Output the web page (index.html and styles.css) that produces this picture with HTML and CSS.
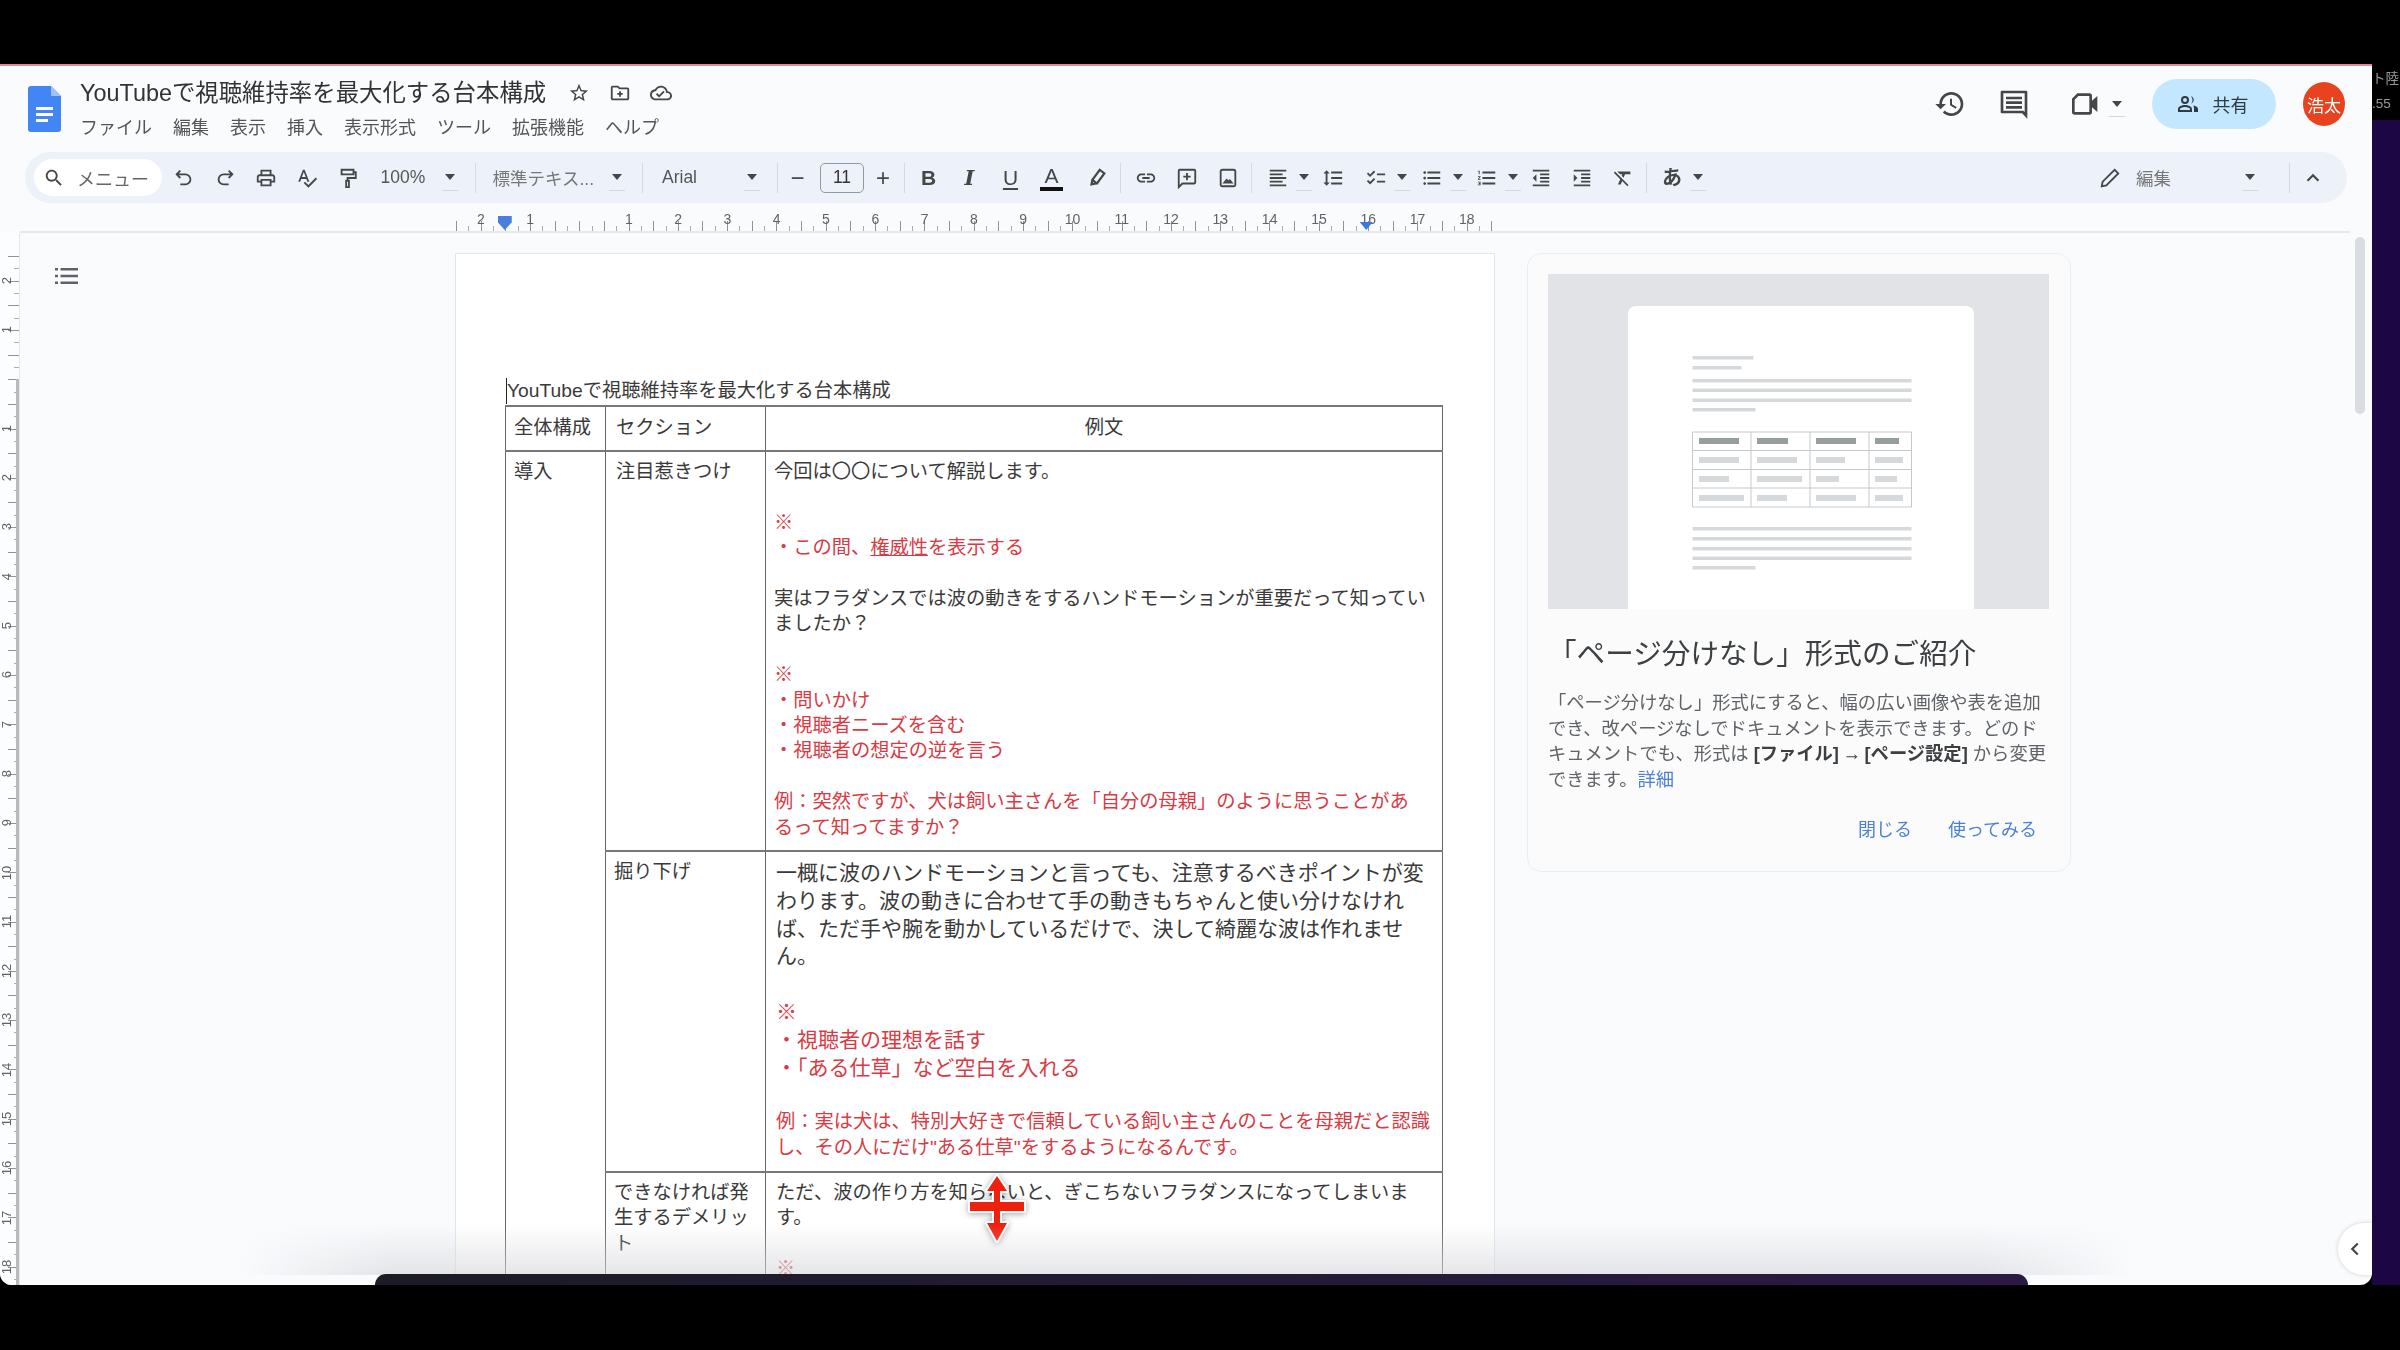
FILE: index.html
```html
<!DOCTYPE html>
<html lang="ja">
<head>
    <meta charset="UTF-8">
    <meta name="viewport" content="width=device-width, initial-scale=1.0">
    <title>YouTubeで視聴維持率を最大化する台本構成</title>
    <link rel="stylesheet" href="styles.css">
</head>
<body>
    <div class="screen">
        <div class="window">
            <!-- Title bar -->
            <div class="head">
                <svg class="logo" viewBox="0 0 33 46"><path fill="#4285f4" d="M3 0h20l10 10v33a3 3 0 0 1-3 3H3a3 3 0 0 1-3-3V3a3 3 0 0 1 3-3z"/><path fill="#a1c2fa" d="M23 0l10 10H23z"/><path fill="#fff" d="M8 21h17v3H8zM8 27h17v3H8zM8 33h12v3H8z"/></svg>
                <div class="doc-info">
                    <div class="title-row">
                        <span class="doc-title">YouTubeで視聴維持率を最大化する台本構成</span>
                        <div class="title-icons">
                            <svg class="ic" viewBox="0 0 24 24"><path d="M22 9.24l-7.19-.62L12 2 9.19 8.63 2 9.24l5.46 4.73L5.82 21 12 17.27 18.18 21l-1.63-7.03L22 9.24zM12 15.4l-3.76 2.27 1-4.28-3.32-2.88 4.38-.38L12 6.1l1.71 4.04 4.38.38-3.32 2.88 1 4.28L12 15.4z"/></svg>
                            <svg class="ic" viewBox="0 0 24 24"><path d="M20 6h-8l-2-2H4c-1.1 0-1.99.9-1.99 2L2 18c0 1.1.9 2 2 2h16c1.1 0 2-.9 2-2V8c0-1.1-.9-2-2-2zm0 12H4V6h5.17l2 2H20v10z"/><path d="M11 10h2v2h2v2h-2v2h-2v-2H9v-2h2z"/></svg>
                            <svg class="ic" viewBox="0 0 24 24"><path d="M19.35 10.04C18.67 6.59 15.64 4 12 4 9.11 4 6.6 5.64 5.35 8.04 2.34 8.36 0 10.91 0 14c0 3.31 2.69 6 6 6h13c2.76 0 5-2.24 5-5 0-2.64-2.05-4.78-4.65-4.96zM19 18H6c-2.21 0-4-1.79-4-4 0-2.05 1.53-3.76 3.56-3.97l1.07-.11.5-.95C8.08 7.14 9.94 6 12 6c2.62 0 4.88 1.86 5.39 4.43l.3 1.5 1.53.11c1.56.1 2.78 1.41 2.78 2.96 0 1.65-1.35 3-3 3zm-9-3.82l-2.09-2.09L6.5 13.5 10 17l6.01-6.01-1.41-1.41z"/></svg>
                        </div>
                    </div>
                    <div class="menu-row">
                        <span>ファイル</span><span>編集</span><span>表示</span><span>挿入</span><span>表示形式</span><span>ツール</span><span>拡張機能</span><span>ヘルプ</span>
                    </div>
                </div>
                <div class="head-right">
                    <svg class="ic-lg" viewBox="0 0 24 24"><path d="M13 3c-4.97 0-9 4.03-9 9H1l3.89 3.89.07.14L9 12H6c0-3.87 3.13-7 7-7s7 3.13 7 7-3.13 7-7 7c-1.93 0-3.68-.79-4.94-2.06l-1.42 1.42C8.27 19.99 10.51 21 13 21c4.97 0 9-4.03 9-9s-4.03-9-9-9zm-1 5v5l4.28 2.54.72-1.21-3.5-2.08V8H12z"/></svg>
                    <svg class="ic-lg comment-ic" viewBox="0 0 24 24"><path d="M3 2h18a1 1 0 0 1 1 1v20l-4-4H3a1 1 0 0 1-1-1V3a1 1 0 0 1 1-1zm1 2v13h15l1 1V4z"/><path d="M6 6.5h12v2H6zM6 10h12v2H6zM6 13.5h12v2H6z"/></svg>
                    <svg class="ic-lg camera-ic" viewBox="0 0 24 24"><path d="M7 4h9a2 2 0 0 1 2 2v3.500L22 6v12l-4-3.500V18a2 2 0 0 1-2 2H5a2 2 0 0 1-2-2V8zm.8 2L5 8.800V18h11V6z"/></svg>
                    <span class="caret caret-plain"></span>
                    <div class="share-btn">
                        <svg class="ic-share" viewBox="0 0 24 24"><path d="M9 4a4 4 0 1 1 0 8 4 4 0 0 1 0-8zm0 2a2 2 0 1 0 0 4 2 2 0 0 0 0-4zM9 13c3.300 0 7 1.600 7 4v3H2v-3c0-2.400 3.700-4 7-4zm0 2c-2.700 0-5 1.200-5 2v1h10v-1c0-.8-2.300-2-5-2zM15 4.200a4 4 0 0 1 0 7.600 6 6 0 0 0 0-7.600zM17.500 13.500c2.500.6 4.500 1.900 4.500 3.500v3h-4v-3c0-1.400-.2-2.500-.5-3.500z"/></svg>
                        <span>共有</span>
                    </div>
                    <div class="avatar">浩太</div>
                </div>
            </div>

            <!-- Toolbar -->
            <div class="toolbar">
                <div class="menu-search">
                    <svg class="ic" viewBox="0 0 24 24"><path d="M15.5 14h-.79l-.28-.27C15.41 12.59 16 11.11 16 9.500 16 5.910 13.090 3 9.500 3S3 5.910 3 9.500 5.910 16 9.500 16c1.610 0 3.090-.59 4.230-1.570l.27.28v.79l5 4.990L20.490 19l-4.990-5zm-6 0C7.010 14 5 11.990 5 9.500S7.010 5 9.500 5 14 7.010 14 9.500 11.990 14 9.500 14z"/></svg>
                    <span>メニュー</span>
                </div>
                <div class="tb"><svg class="ic st" viewBox="0 0 24 24"><path d="M8 4 4 8l4 4M4 8h9.500a5.500 5.500 0 0 1 0 11H8"/></svg></div>
                <div class="tb"><svg class="ic st" viewBox="0 0 24 24"><path d="M16 4l4 4-4 4M20 8h-9.500a5.500 5.500 0 0 0 0 11H16"/></svg></div>
                <div class="tb"><svg class="ic" viewBox="0 0 24 24"><path d="M19 8h-1V3H6v5H5c-1.660 0-3 1.340-3 3v6h4v4h12v-4h4v-6c0-1.660-1.340-3-3-3zM8 5h8v3H8V5zm8 12v2H8v-4h8v2zm2-2v-2H6v2H4v-4c0-.55.45-1 1-1h14c.55 0 1 .45 1 1v4h-2z"/></svg></div>
                <div class="tb"><svg class="ic" viewBox="0 0 24 24"><path d="M12.450 16h2.090L9.430 3H7.570L2.460 16h2.090l1.120-3h5.640l1.140 3zm-6.020-5L8.500 5.480 10.570 11H6.430zm15.160.59l-8.090 8.090L9.830 16l-1.410 1.410 5.090 5.090L23 13l-1.410-1.410z"/></svg></div>
                <div class="tb"><svg class="ic st" viewBox="0 0 24 24"><path d="M5 3h13v5H5zM18 5.500h2.500V12H11.500v3M10 15h3v7h-3z"/></svg></div>
                <div class="dd dd-zoom"><span>100%</span><span class="caret"></span></div>
                <div class="sep"></div>
                <div class="dd dd-style"><span>標準テキス...</span><span class="caret"></span></div>
                <div class="sep"></div>
                <div class="dd dd-font"><span>Arial</span><span class="caret"></span></div>
                <div class="sep tight"></div>
                <div class="tb tb-minus"><span class="sign">−</span></div>
                <div class="size-box">11</div>
                <div class="tb tb-plus"><span class="sign">+</span></div>
                <div class="sep after-plus"></div>
                <div class="tb"><span class="fmt fmt-b">B</span></div>
                <div class="tb"><span class="fmt fmt-i">I</span></div>
                <div class="tb"><span class="fmt fmt-u">U</span></div>
                <div class="tb"><span class="fmt fmt-a">A</span></div>
                <div class="tb ml4"><svg class="ic st thick" viewBox="0 0 24 24"><path d="M15 3l5 4-8 11-5-4zM7 14l-1 5 5-1"/></svg></div>
                <div class="sep after-high"></div>
                <div class="tb"><svg class="ic" viewBox="0 0 24 24"><path d="M3.900 12c0-1.710 1.390-3.100 3.100-3.100h4V7H7c-2.760 0-5 2.240-5 5s2.240 5 5 5h4v-1.900H7c-1.710 0-3.100-1.390-3.100-3.100zM8 13h8v-2H8v2zm9-6h-4v1.900h4c1.710 0 3.100 1.390 3.100 3.100s-1.390 3.100-3.100 3.100h-4V17h4c2.760 0 5-2.240 5-5s-2.240-5-5-5z"/></svg></div>
                <div class="tb"><svg class="ic st" viewBox="0 0 24 24"><path d="M4 3h16a1 1 0 0 1 1 1v13a1 1 0 0 1-1 1H7l-4 4V4a1 1 0 0 1 1-1zM12 6.500v8M8 10.500h8"/></svg></div>
                <div class="tb"><svg class="ic st" viewBox="0 0 24 24"><rect x="4" y="3" width="16" height="18" rx="2"/><path d="M8 17l2.500-3 2 2 1.500-1.500 2 2.500z"/></svg></div>
                <div class="sep after-image"></div>
                <div class="pair"><div class="tb-n"><svg class="ic" viewBox="0 0 24 24"><path d="M3 3h18v2H3zM3 7h14v2H3zM3 11h18v2H3zM3 15h14v2H3zM3 19h18v2H3z"/></svg></div><span class="caret"></span></div>
                <div class="tb ml1"><svg class="ic" viewBox="0 0 24 24"><path d="M6 7h2.500L5 3.500 1.500 7H4v10H1.500L5 20.500 8.500 17H6V7zm4-2v2h12V5H10zm0 14h12v-2H10v2zm0-6h12v-2H10v2z"/></svg></div>
                <div class="pair ml4"><div class="tb-n"><svg class="ic" viewBox="0 0 24 24"><path d="M22 7h-9v2h9V7zm0 8h-9v2h9v-2zM5.540 11L2 7.460l1.410-1.410 2.120 2.120 4.240-4.240 1.410 1.410L5.540 11zm0 8L2 15.460l1.410-1.410 2.120 2.120 4.240-4.240 1.410 1.410L5.540 19z"/></svg></div><span class="caret"></span></div>
                <div class="pair ml4"><div class="tb-n"><svg class="ic" viewBox="0 0 24 24"><path d="M4 10.500c-.83 0-1.500.67-1.500 1.500s.67 1.500 1.500 1.500 1.500-.67 1.500-1.500-.67-1.500-1.500-1.500zm0-6c-.83 0-1.500.67-1.500 1.500S3.170 7.500 4 7.500 5.500 6.830 5.500 6 4.830 4.500 4 4.500zm0 12c-.83 0-1.500.68-1.500 1.500s.68 1.500 1.500 1.500 1.500-.68 1.500-1.500-.67-1.500-1.500-1.500zM7 19h14v-2H7v2zm0-6h14v-2H7v2zm0-8v2h14V5H7z"/></svg></div><span class="caret"></span></div>
                <div class="pair ml3"><div class="tb-n"><svg class="ic" viewBox="0 0 24 24"><path d="M2 17h2v.5H3v1h1v.5H2v1h3v-4H2v1zm1-9h1V4H2v1h1v3zm-1 3h1.800L2 13.100v.9h3v-1H3.200L5 10.900V10H2v1zm5-6v2h14V5H7zm0 14h14v-2H7v2zm0-6h14v-2H7v2z"/></svg></div><span class="caret"></span></div>
                <div class="tb"><svg class="ic" viewBox="0 0 24 24"><path d="M11 17h10v-2H11v2zm-8-5l4 4V8l-4 4zm0 9h18v-2H3v2zM3 3v2h18V3H3zm8 6h10V7H11v2zm0 4h10v-2H11v2z"/></svg></div>
                <div class="tb"><svg class="ic" viewBox="0 0 24 24"><path d="M3 21h18v-2H3v2zM3 8v8l4-4-4-4zm8 9h10v-2H11v2zM3 3v2h18V3H3zm8 6h10V7H11v2zm0 4h10v-2H11v2z"/></svg></div>
                <div class="tb"><svg class="ic" viewBox="0 0 24 24"><path d="M3.270 5L2 6.270l6.970 6.970L6.500 19h3l1.570-3.660L16.730 21 18 19.730 3.550 5.270 3.270 5zM6 5v.18L8.820 8h2.400l-.72 1.680 2.100 2.100L14.210 8H20V5H6z"/></svg></div>
                <div class="sep after-clear"></div>
                <div class="pair"><div class="tb-n"><span class="fmt fmt-kana">あ</span></div><span class="caret"></span></div>
                <div class="mode">
                    <svg class="ic st" viewBox="0 0 24 24"><path d="M17 3l4 4L8 20l-5 1 1-5z"/></svg>
                    <span class="mode-label">編集</span>
                    <span class="caret caret-plain"></span>
                </div>
                <div class="sep after-mode"></div>
                <div class="tb"><svg class="ic st thick" viewBox="0 0 24 24"><path d="M6 15l6-6 6 6"/></svg></div>
            </div>

            <!-- Horizontal ruler -->
            <div class="ruler-row">
                <div class="ruler">
                    <span>2</span><span>1</span><span></span><span>1</span><span>2</span><span>3</span><span>4</span><span>5</span><span>6</span><span>7</span><span>8</span><span>9</span><span>10</span><span>11</span><span>12</span><span>13</span><span>14</span><span>15</span><span>16</span><span>17</span><span>18</span>
                    <div class="marker-left"></div>
                    <div class="marker-right"></div>
                </div>
            </div>

            <div class="main">
                <div class="vruler">
                    <div class="vruler-cells">
                        <span>2</span><span>1</span><span></span><span>1</span><span>2</span><span>3</span><span>4</span><span>5</span><span>6</span><span>7</span><span>8</span><span>9</span><span>10</span><span>11</span><span>12</span><span>13</span><span>14</span><span>15</span><span>16</span><span>17</span><span>18</span>
                    </div>
                    <div class="vruler-strip"></div>
                </div>

                <div class="canvas">
                    <svg class="outline-ic" viewBox="0 0 24 24"><path d="M1 4h3v2.500H1zM1 10.800h3v2.500H1zM1 17.500h3V20H1zM6.500 4H24v2.500H6.500zM6.500 10.800H24v2.500H6.500zM6.500 17.500H24V20H6.500z"/></svg>

                    <!-- Document page -->
                    <div class="page">
                        <div class="doc-heading">YouTubeで視聴維持率を最大化する台本構成</div>
                        <table class="script-table">
                            <colgroup>
                                <col class="col-a">
                                <col class="col-b">
                                <col class="col-c">
                            </colgroup>
                            <tr class="row-head">
                                <td>全体構成</td>
                                <td>セクション</td>
                                <td class="center">例文</td>
                            </tr>
                            <tr class="row-1">
                                <td rowspan="3">導入</td>
                                <td>注目惹きつけ</td>
                                <td>
                                    <p>今回は〇〇について解説します。</p>
                                    <p class="red">※<br>・この間、<u>権威性</u>を表示する</p>
                                    <p>実はフラダンスでは波の動きをするハンドモーションが重要だって知ってい<br>ましたか？</p>
                                    <p class="red">※<br>・問いかけ<br>・視聴者ニーズを含む<br>・視聴者の想定の逆を言う</p>
                                    <p class="red">例：突然ですが、犬は飼い主さんを「自分の母親」のように思うことがあ<br>るって知ってますか？</p>
                                </td>
                            </tr>
                            <tr class="row-2">
                                <td>掘り下げ</td>
                                <td>
                                    <p class="big">一概に波のハンドモーションと言っても、注意するべきポイントが変<br>わります。波の動きに合わせて手の動きもちゃんと使い分けなけれ<br>ば、ただ手や腕を動かしているだけで、決して綺麗な波は作れませ<br>ん。</p>
                                    <p class="big red">※<br>・視聴者の理想を話す<br>・「ある仕草」など空白を入れる</p>
                                    <p class="red">例：実は犬は、特別大好きで信頼している飼い主さんのことを母親だと認識<br>し、その人にだけ"ある仕草"をするようになるんです。</p>
                                </td>
                            </tr>
                            <tr class="row-3">
                                <td>できなければ発<br>生するデメリッ<br>ト</td>
                                <td>
                                    <p>ただ、波の作り方を知らないと、ぎこちないフラダンスになってしまいま<br>す。</p>
                                    <p class="red">※</p>
                                </td>
                            </tr>
                        </table>
                    </div>

                    <!-- Pageless promo card -->
                    <div class="promo">
                        <svg class="promo-img" viewBox="0 0 501 335">
                            <rect width="501" height="335" fill="#e1e3e6"/>
                            <path d="M80 335V40a8 8 0 0 1 8-8h330a8 8 0 0 1 8 8v295z" fill="#fff"/>
                            <g fill="#d6d9db">
                                <rect x="144.500" y="82" width="61" height="3.500"/>
                                <rect x="144.500" y="92" width="49" height="3.500"/>
                                <rect x="144.500" y="105" width="219" height="3.500"/>
                                <rect x="144.500" y="114.500" width="219" height="3.500"/>
                                <rect x="144.500" y="124.500" width="219" height="3.500"/>
                                <rect x="144.500" y="134" width="63" height="3.500"/>
                                <rect x="144.500" y="253" width="219" height="3.500"/>
                                <rect x="144.500" y="263" width="219" height="3.500"/>
                                <rect x="144.500" y="273" width="219" height="3.500"/>
                                <rect x="144.500" y="282.500" width="219" height="3.500"/>
                                <rect x="144.500" y="292" width="63" height="3.500"/>
                                <rect x="151" y="183" width="40" height="6"/>
                                <rect x="209" y="183" width="40" height="6"/>
                                <rect x="268" y="183" width="29" height="6"/>
                                <rect x="327" y="183" width="28" height="6"/>
                                <rect x="151" y="202" width="30" height="6"/>
                                <rect x="209" y="202" width="45" height="6"/>
                                <rect x="268" y="202" width="23" height="6"/>
                                <rect x="327" y="202" width="22" height="6"/>
                                <rect x="151" y="221" width="45" height="6"/>
                                <rect x="209" y="221" width="30" height="6"/>
                                <rect x="268" y="221" width="40" height="6"/>
                                <rect x="327" y="221" width="28" height="6"/>
                            </g>
                            <g fill="#979e9e">
                                <rect x="151" y="164" width="40" height="6"/>
                                <rect x="209" y="164" width="31" height="6"/>
                                <rect x="268" y="164" width="40" height="6"/>
                                <rect x="327" y="164" width="24" height="6"/>
                            </g>
                            <path d="M144.500 158h219v75h-219zM144.500 176.500h219M144.500 195.500h219M144.500 214h219M203 158v75M262 158v75M321 158v75" fill="none" stroke="#c6c9cb"/>
                        </svg>
                        <div class="promo-title">「ページ分けなし」形式のご紹介</div>
                        <div class="promo-text">「ページ分けなし」形式にすると、幅の広い画像や表を追加<br>でき、改ページなしでドキュメントを表示できます。どのド<br>キュメントでも、形式は <b>[ファイル]&#8201;→&#8201;[ページ設定]</b> から変更<br>できます。<span class="link">詳細</span></div>
                        <div class="promo-actions">
                            <span class="link">閉じる</span>
                            <span class="link">使ってみる</span>
                        </div>
                    </div>
                </div>

                <div class="scrollbar"></div>
                <div class="side-toggle">
                    <svg class="ic st thick" viewBox="0 0 24 24"><path d="M15 6l-6 6 6 6"/></svg>
                </div>
            </div>

            <!-- Resize cursor over the table -->
            <svg class="cursor" viewBox="0 0 60 72">
                <path d="M30 3l10 15h-7v11h24v9H33v12h7L30 68 20 50h7V38H3v-9h24V18h-7z" fill="#f0200f" stroke="#fff" stroke-width="4" stroke-linejoin="round" paint-order="stroke"/>
            </svg>

            <div class="bottom-fade"></div>
            <div class="dock"></div>
        </div>

        <div class="side-strip">
            <div class="strip-top">ト陸<br>.55</div>
            <div class="strip-wall"></div>
        </div>
    </div>
</body>
</html>
```

FILE: styles.css
```css
* {
    box-sizing: border-box;
}

body {
    margin: 0;
    height: 1350px;
    overflow: hidden;
    background-color: #000;
    font-family: "Liberation Sans", "Noto Sans CJK JP", sans-serif;
    color: #3c4043;
}

.screen {
    display: flex;
    padding-top: 64px;
    height: 1285px;
    filter: blur(0.7px);
}

.window {
    position: relative;
    display: flex;
    flex-direction: column;
    width: 2372px;
    height: 1221px;
    background-color: #f9fbfd;
    border-top: 2px solid #e08a94;
    border-radius: 0 0 12px 12px;
    overflow: hidden;
}

/* Title bar */
.head {
    display: flex;
    align-items: center;
    height: 86px;
    flex-shrink: 0;
}

.logo {
    width: 33px;
    height: 46px;
    margin-left: 28px;
    flex-shrink: 0;
}

.doc-info {
    align-self: flex-start;
    margin-left: 19px;
    padding-top: 8px;
}

.title-row {
    display: flex;
    align-items: center;
    height: 34px;
}

.doc-title {
    font-size: 23.4px;
    color: #333;
    white-space: nowrap;
}

.title-icons {
    display: flex;
    gap: 19px;
    margin-left: 22px;
    padding-top: 3px;
}

.ic {
    width: 22px;
    height: 22px;
    fill: #444746;
    flex-shrink: 0;
}

.ic.st {
    fill: none;
    stroke: #444746;
    stroke-width: 2;
}

.ic.thick {
    stroke-width: 2.4;
}

.menu-row {
    display: flex;
    gap: 21px;
    height: 36px;
    align-items: center;
    font-size: 18px;
    color: #555;
    white-space: nowrap;
}

.head-right {
    display: flex;
    align-items: center;
    align-self: flex-start;
    height: 50px;
    margin-top: 13px;
    margin-left: auto;
    padding-right: 27px;
}

.ic-lg {
    width: 32px;
    height: 32px;
    fill: #444746;
}

.comment-ic {
    margin-left: 32px;
}

.camera-ic {
    margin-left: 38px;
}

.caret-plain {
    height: auto;
    border-bottom: none;
    margin-left: 9px;
}

.share-btn {
    display: flex;
    align-items: center;
    justify-content: center;
    gap: 13px;
    width: 124px;
    height: 50px;
    margin-left: 27px;
    padding-right: 4px;
    background-color: #c2e7ff;
    border-radius: 25px;
    font-size: 18px;
    color: #2f3a42;
}

.ic-share {
    width: 24px;
    height: 24px;
    fill: #2f3a42;
}

.avatar {
    display: flex;
    align-items: center;
    justify-content: center;
    width: 42px;
    height: 44px;
    margin-left: 27px;
    background-color: #e8431e;
    border-radius: 50%;
    color: #fff;
    font-size: 17px;
    white-space: nowrap;
}

/* Toolbar */
.toolbar {
    display: flex;
    align-items: center;
    flex-shrink: 0;
    width: 2322px;
    height: 51px;
    margin-left: 25px;
    padding-left: 9px;
    background-color: #edf2fa;
    border-radius: 26px;
    font-size: 17.5px;
    color: #555;
    white-space: nowrap;
}

.menu-search {
    display: flex;
    align-items: center;
    gap: 12px;
    width: 128px;
    height: 37px;
    margin-right: 1.5px;
    padding-left: 9px;
    background-color: #fff;
    border-radius: 19px;
    font-size: 18px;
    color: #666;
}

.tb {
    display: flex;
    align-items: center;
    justify-content: center;
    width: 41px;
    height: 41px;
    flex-shrink: 0;
}

.tb-minus {
    width: 40px;
}

.tb-plus {
    width: 38px;
}

.sign {
    font-size: 24px;
    line-height: 1;
    color: #444746;
}

.tb-n {
    display: flex;
    align-items: center;
    justify-content: center;
    width: 36px;
    height: 41px;
}

.pair {
    display: flex;
    align-items: center;
    width: 52px;
    flex-shrink: 0;
}

.ml1 { margin-left: 1px; }
.ml3 { margin-left: 3px; }
.ml4 { margin-left: 4px; }

.caret {
    display: flex;
    align-items: center;
    justify-content: center;
    width: 16px;
    height: 26px;
    flex-shrink: 0;
    border-bottom: 1px solid #d3d8de;
}

.caret::before {
    content: "";
    border-left: 5px solid transparent;
    border-right: 5px solid transparent;
    border-top: 6px solid #444746;
}

.dd {
    display: flex;
    align-items: center;
    justify-content: space-between;
    flex-shrink: 0;
}

.dd-zoom {
    width: 77px;
    margin-left: 12px;
}

.dd-style {
    width: 132px;
    color: #777;
}

.dd-font {
    width: 100px;
    padding-left: 2.5px;
}

.sep {
    width: 1px;
    height: 30px;
    margin: 0 17px;
    background-color: #d5dae1;
    flex-shrink: 0;
}

.sep.tight {
    margin-right: 0;
}

.sep.after-plus {
    margin: 0 3px 0 2px;
}

.sep.after-high {
    margin: 0 4px 0 3px;
}

.sep.after-image {
    margin: 0 8px 0 2.5px;
}

.sep.after-clear {
    margin: 0 7px 0 2.5px;
}

.sep.after-mode {
    margin: 0 2px 0 31px;
}

.size-box {
    width: 44px;
    height: 30px;
    margin-left: 2.5px;
    border: 1.5px solid #8f9aa3;
    border-radius: 5px;
    text-align: center;
    line-height: 27px;
    color: #333;
}

.fmt {
    font-size: 21px;
    line-height: 1;
    color: #444746;
}

.fmt-b {
    font-weight: bold;
}

.fmt-i {
    font-family: "DejaVu Serif", serif;
    font-style: italic;
    font-weight: bold;
}

.fmt-u {
    text-decoration: underline;
    text-underline-offset: 3px;
    text-decoration-thickness: 2px;
}

.fmt-a {
    padding: 0 4px 1px;
    border-bottom: 4px solid #111;
}

.fmt-kana {
    font-weight: bold;
    font-size: 20px;
}

.mode {
    display: flex;
    align-items: center;
    width: 159px;
    margin-left: 393px;
    flex-shrink: 0;
}

.mode-label {
    margin-left: 15px;
    color: #777;
}

.mode .caret-plain {
    margin-left: auto;
}

/* Rulers */
.ruler-row {
    position: relative;
    height: 30px;
    flex-shrink: 0;
    margin-left: 20px;
    margin-right: 22px;
    border-bottom: 2px solid #e6e8eb;
}

.ruler {
    position: absolute;
    left: 436.250px;
    bottom: 0;
    display: flex;
    width: 1035.300px;
    height: 26px;
    font-size: 14px;
    color: #5f6368;
    background:
        repeating-linear-gradient(90deg, #8f959b 0 1px, transparent 1px 24.650px) left bottom / 100% 10px no-repeat,
        repeating-linear-gradient(90deg, #a9aeb2 0 1px, transparent 1px 12.325px) left bottom / 100% 5px no-repeat;
}

.ruler span {
    width: 49.300px;
    height: 18px;
    flex-shrink: 0;
    text-align: center;
    line-height: 28px;
}

.marker-left {
    position: absolute;
    left: 41.500px;
    top: 11px;
    width: 14px;
    height: 14px;
    background-color: #4a7fdb;
    clip-path: polygon(0 0, 100% 0, 100% 45%, 50% 100%, 0 45%);
}

.marker-right {
    position: absolute;
    left: 903.500px;
    top: 17px;
    width: 13px;
    height: 8px;
    background-color: #3d78e0;
    clip-path: polygon(0 0, 100% 0, 50% 100%);
}

.main {
    position: relative;
    display: flex;
    flex: 1;
    min-height: 0;
    overflow: hidden;
}

.vruler {
    position: relative;
    width: 20px;
    flex-shrink: 0;
    background-color: #fcfdfe;
    border-right: 1px solid #e6e8eb;
}

.vruler-cells {
    display: flex;
    flex-direction: column;
    margin-top: 23px;
    background:
        repeating-linear-gradient(180deg, #8f959b 0 1px, transparent 1px 24.650px) right top / 11px 100% no-repeat,
        repeating-linear-gradient(180deg, #a9aeb2 0 1px, transparent 1px 12.325px) right top / 5px 100% no-repeat;
}

.vruler-cells span {
    display: flex;
    align-items: center;
    justify-content: center;
    width: 14px;
    height: 49.300px;
    flex-shrink: 0;
    writing-mode: vertical-rl;
    transform: rotate(180deg);
    font-size: 13px;
    line-height: 14px;
    color: #5f6368;
}

.vruler-strip {
    position: absolute;
    top: 146px;
    bottom: 0;
    right: 0;
    width: 3px;
    background-color: #b8bbbe;
}

.canvas {
    display: flex;
    align-items: flex-start;
    flex: 1;
    padding: 20px 0 0 34px;
}

.outline-ic {
    width: 24px;
    height: 24px;
    margin-top: 11px;
    fill: #5f6368;
    flex-shrink: 0;
}

/* Document page */
.page {
    width: 1040px;
    height: 1100px;
    margin-left: 377px;
    padding: 124px 0 0 49px;
    background-color: #fff;
    border: 1px solid #e3e5e8;
    flex-shrink: 0;
    font-size: 19.25px;
    line-height: 25.4px;
    color: #3a3a3a;
}

.doc-heading {
    height: 26px;
    margin-bottom: 1px;
    margin-left: 1px;
    white-space: nowrap;
    border-left: 1px solid #222;
}

.script-table {
    width: 937px;
    table-layout: fixed;
    border-collapse: collapse;
    white-space: nowrap;
}

.col-a { width: 100px; }
.col-b { width: 160px; }
.col-c { width: 677px; }

.script-table td {
    padding: 7px 8px 0;
    vertical-align: top;
    border: 1px solid #666;
    border-top: 2px solid #777;
    border-bottom: 2px solid #777;
}

.script-table td:nth-child(2) {
    padding-left: 10px;
}

.row-head td {
    height: 45px;
    padding-top: 8px;
}

.script-table .center {
    text-align: center;
}

.row-1 td {
    height: 400px;
}

.row-2 td {
    height: 321px;
}

.script-table p {
    margin: 0;
}

.script-table p + p {
    margin-top: 25.4px;
}

.script-table .big + p {
    margin-top: 27.800px;
}

.big {
    font-size: 21px;
    line-height: 27.800px;
}

.red {
    color: #d93a44;
}

/* Promo card */
.promo {
    width: 544px;
    height: 619px;
    margin-left: 32px;
    padding: 20px 20px 0;
    background-color: #fbfbfb;
    border: 1px solid #ebedef;
    border-radius: 14px;
    flex-shrink: 0;
}

.promo-img {
    display: block;
    width: 501px;
    height: 335px;
}

.promo-title {
    margin-top: 25px;
    font-size: 28.6px;
    line-height: 40px;
    color: #3c4043;
    white-space: nowrap;
}

.promo-text {
    margin-top: 16px;
    font-size: 18.3px;
    line-height: 25.6px;
    color: #5f6368;
    white-space: nowrap;
}

.promo-text b {
    color: #3c4043;
}

.link {
    color: #4a7fdc;
}

.promo-actions {
    display: flex;
    justify-content: flex-end;
    gap: 36px;
    margin-top: 25px;
    padding-right: 13px;
    font-size: 18px;
    line-height: 26px;
}

.scrollbar {
    position: absolute;
    top: 4px;
    right: 7px;
    width: 10px;
    height: 177px;
    background-color: #d9dce0;
    border-radius: 5px;
}

.side-toggle {
    position: absolute;
    right: 0;
    bottom: 10px;
    display: flex;
    align-items: center;
    justify-content: center;
    width: 34px;
    height: 52px;
    background-color: #fff;
    border-radius: 26px 0 0 26px;
    box-shadow: 0 0 4px rgba(0, 0, 0, 0.18);
}

.cursor {
    position: absolute;
    left: 967px;
    top: 1107px;
    width: 60px;
    height: 72px;
    filter: drop-shadow(0 1px 3px rgba(0, 0, 0, 0.35));
}

.bottom-fade {
    position: absolute;
    left: 240px;
    right: 240px;
    bottom: 10px;
    height: 50px;
    background: linear-gradient(180deg, rgba(215, 216, 220, 0), rgba(215, 216, 220, 0.65));
    -webkit-mask-image: linear-gradient(90deg, transparent, #000 150px, #000 calc(100% - 150px), transparent);
    mask-image: linear-gradient(90deg, transparent, #000 150px, #000 calc(100% - 150px), transparent);
}

.dock {
    position: absolute;
    left: 375px;
    bottom: 0;
    width: 1653px;
    height: 11px;
    background: linear-gradient(90deg, #1d1b26, #2a1a44);
    border-radius: 14px 14px 0 0;
}

.side-strip {
    display: flex;
    flex-direction: column;
    width: 28px;
    height: 1221px;
}

.strip-top {
    height: 56px;
    padding-top: 2px;
    overflow: hidden;
    font-size: 13.5px;
    line-height: 25px;
    color: #9a9a9a;
    white-space: nowrap;
}

.strip-wall {
    flex: 1;
    background-color: #1d0644;
}
```
